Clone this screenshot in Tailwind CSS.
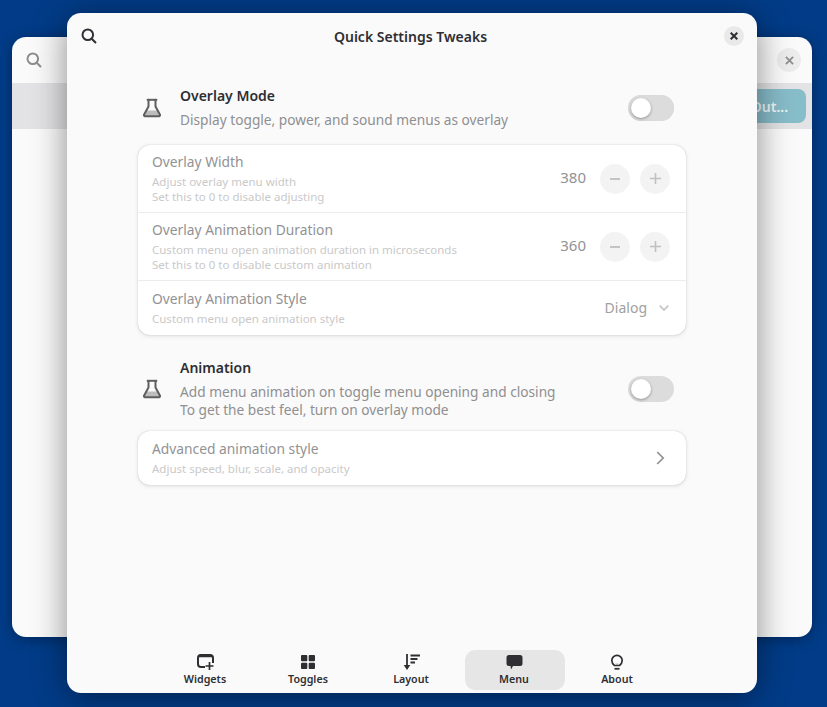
<!DOCTYPE html>
<html lang="en">
  <head>
    <meta charset="UTF-8" />
    <title>Quick Settings Tweaks</title>
    <script src="https://cdn.jsdelivr.net/npm/@tailwindcss/browser@4"></script>
  </head>
  <body class="relative w-[827px] h-[707px] overflow-hidden bg-[#023c88] font-['Noto_Sans',sans-serif]">
    <!-- window behind -->
    <div class="absolute left-[12px] top-[37px] w-[800px] h-[600px] rounded-[14px] bg-[#fafafb] shadow-[0_2px_14px_rgba(0,0,0,0.35)] overflow-hidden">
      <div class="h-[46px] flex items-center justify-between pl-[14px] pr-[11px]">
        <svg class="w-[16px] h-[16px] text-[#8e8e8e]" viewBox="0 0 16 16" fill="none" stroke="currentColor" stroke-width="2"><circle cx="6.8" cy="6.8" r="5.3" /><path d="M10.700 10.700 15 15" /></svg>
        <div class="w-[24px] h-[24px] rounded-full bg-[#ececec] flex items-center justify-center">
          <svg class="w-[9px] h-[9px] text-[#8e8e8e]" viewBox="0 0 10 10" stroke="currentColor" stroke-width="2"><path d="M1 1 9 9M9 1 1 9" /></svg>
        </div>
      </div>
      <div class="h-[46px] bg-[#e3e3e5] flex items-center justify-end pr-[6px]">
        <div class="w-[160px] h-[34px] rounded-[8px] bg-[#87bcc9] flex items-center justify-end pr-[18px] text-[14px] font-semibold text-[#eef6f8]">Out...</div>
      </div>
    </div>

    <!-- front window -->
    <div class="absolute left-[67px] top-[13px] w-[690px] h-[680px] rounded-[14px] bg-[#fafafa] shadow-[0_4px_34px_rgba(0,0,0,0.45)] flex flex-col text-[#2e2e33]">
      <header class="relative h-[46px] flex items-center justify-between pl-[14px] pr-[13px]">
        <svg class="w-[16px] h-[16px]" viewBox="0 0 16 16" fill="none" stroke="#2e2e33" stroke-width="2"><circle cx="6.800" cy="6.800" r="5.300" /><path d="M10.700 10.700 15 15" /></svg>
        <h1 class="text-[14px] font-semibold">Quick Settings Tweaks</h1>
        <div class="w-[20px] h-[20px] rounded-full bg-[#e9e9e9] flex items-center justify-center">
          <svg class="w-[8px] h-[8px]" viewBox="0 0 8 8" stroke="#2e2e33" stroke-width="2"><path d="M.7.7l6.6 6.600M7.300.7.7 7.300" /></svg>
        </div>
      </header>

      <main class="flex-1 px-[71px] pt-[19px]">
        <section class="flex items-center h-[60px] mb-[7px]">
          <div class="w-[42px] pl-[4px]">
            <svg class="w-[20px] h-[20px]" viewBox="0 0 20 20"><path d="M5 12.500h10l3 5.500H2z" fill="#bdbdbd" /><path d="M6.500 2v6.500L2 16.800a1 1 0 0 0 1 1.400h14a1 1 0 0 0 1-1.400L13.500 8.500V2" fill="none" stroke="#5e5e60" stroke-width="2" stroke-linejoin="round" /><path d="M4.800 1.800h10.400" stroke="#5e5e60" stroke-width="2" /></svg>
          </div>
          <div class="flex-1 pb-[2px]">
            <h2 class="text-[14px] font-semibold leading-[20px]">Overlay Mode</h2>
            <p class="text-[13.7px] leading-[19px] mt-[4px] text-[#8f8f91]">Display toggle, power, and sound menus as overlay</p>
          </div>
          <div class="w-[46px] h-[26px] rounded-full bg-[#dcdcdc] flex items-center pl-[3px] mr-[12px] shadow-[inset_0_0_1px_rgba(0,0,0,0.1)]">
            <div class="w-[20px] h-[20px] rounded-full bg-white shadow-[0_1px_3px_rgba(0,0,0,0.35)]"></div>
          </div>
        </section>

        <section class="w-[548px] rounded-[12px] bg-white shadow-[0_0_1px_rgba(0,0,0,0.25),0_1px_4px_rgba(0,0,0,0.12)] divide-y divide-[#ececec]">
          <div class="h-[68px] flex items-center justify-between pl-[14px] pr-[16px]">
            <div class="pb-[2px]">
              <div class="text-[13.8px] leading-[20px] text-[#929294]">Overlay Width</div>
              <div class="text-[11.5px] leading-[15px] mt-[2px] text-[#c9c9c9]">Adjust overlay menu width<br />Set this to 0 to disable adjusting</div>
            </div>
            <div class="flex items-center">
              <span class="text-[15px] text-[#929294] mr-[14px] pb-[2px]">380</span>
              <div class="w-[30px] h-[30px] rounded-full bg-[#f3f3f3] flex items-center justify-center mr-[10px]"><div class="w-[10px] h-[2px] bg-[#c4c4c4]"></div></div>
              <div class="w-[30px] h-[30px] rounded-full bg-[#f3f3f3] flex items-center justify-center"><svg class="w-[11px] h-[11px]" viewBox="0 0 11 11" stroke="#c0c0c0" stroke-width="1.600"><path d="M5.500 0v11M0 5.500h11" /></svg></div>
            </div>
          </div>
          <div class="h-[68px] flex items-center justify-between pl-[14px] pr-[16px]">
            <div class="pb-[2px]">
              <div class="text-[13.8px] leading-[20px] text-[#929294]">Overlay Animation Duration</div>
              <div class="text-[11.5px] leading-[15px] mt-[2px] text-[#c9c9c9]">Custom menu open animation duration in microseconds<br />Set this to 0 to disable custom animation</div>
            </div>
            <div class="flex items-center">
              <span class="text-[15px] text-[#929294] mr-[14px] pb-[2px]">360</span>
              <div class="w-[30px] h-[30px] rounded-full bg-[#f3f3f3] flex items-center justify-center mr-[10px]"><div class="w-[10px] h-[2px] bg-[#c4c4c4]"></div></div>
              <div class="w-[30px] h-[30px] rounded-full bg-[#f3f3f3] flex items-center justify-center"><svg class="w-[11px] h-[11px]" viewBox="0 0 11 11" stroke="#c0c0c0" stroke-width="1.600"><path d="M5.500 0v11M0 5.500h11" /></svg></div>
            </div>
          </div>
          <div class="h-[54px] flex items-center justify-between pl-[14px] pr-[16px]">
            <div class="pb-[2px]">
              <div class="text-[13.8px] leading-[20px] text-[#929294]">Overlay Animation Style</div>
              <div class="text-[11.5px] leading-[15px] mt-[2px] text-[#c9c9c9]">Custom menu open animation style</div>
            </div>
            <div class="flex items-center">
              <span class="text-[14px] text-[#a0a0a2] mr-[12px] pb-[2px]">Dialog</span>
              <svg class="w-[10px] h-[6px] mr-[1px]" viewBox="0 0 10 6" fill="none" stroke="#c4c4c4" stroke-width="1.700"><path d="m.7.7 4.300 4.300L9.300.7" /></svg>
            </div>
          </div>
        </section>

        <section class="flex items-center h-[60px] mt-[24px] mb-[12px]">
          <div class="w-[42px] pl-[4px]">
            <svg class="w-[20px] h-[20px]" viewBox="0 0 20 20"><path d="M5 12.500h10l3 5.500H2z" fill="#bdbdbd" /><path d="M6.500 2v6.500L2 16.800a1 1 0 0 0 1 1.400h14a1 1 0 0 0 1-1.400L13.500 8.500V2" fill="none" stroke="#5e5e60" stroke-width="2" stroke-linejoin="round" /><path d="M4.800 1.800h10.400" stroke="#5e5e60" stroke-width="2" /></svg>
          </div>
          <div class="flex-1 pb-[2px]">
            <h2 class="text-[14px] font-semibold leading-[20px]">Animation</h2>
            <p class="text-[13.7px] leading-[18px] mt-[5px] text-[#8f8f91]">Add menu animation on toggle menu opening and closing<br />To get the best feel, turn on overlay mode</p>
          </div>
          <div class="w-[46px] h-[26px] rounded-full bg-[#dcdcdc] flex items-center pl-[3px] mr-[12px]">
            <div class="w-[20px] h-[20px] rounded-full bg-white shadow-[0_1px_3px_rgba(0,0,0,0.35)]"></div>
          </div>
        </section>

        <section class="w-[548px] h-[54px] rounded-[12px] bg-white shadow-[0_0_1px_rgba(0,0,0,0.25),0_1px_4px_rgba(0,0,0,0.12)] flex items-center justify-between pl-[14px] pr-[21px]">
          <div class="pb-[2px]">
            <div class="text-[13.8px] leading-[20px] text-[#929294]">Advanced animation style</div>
            <div class="text-[11.5px] leading-[15px] mt-[2px] text-[#c9c9c9]">Adjust speed, blur, scale, and opacity</div>
          </div>
          <svg class="w-[9px] h-[14px]" viewBox="0 0 9 14" fill="none" stroke="#8f8f91" stroke-width="1.700"><path d="m1.200 1 6 6-6 6" /></svg>
        </section>
      </main>

      <nav class="h-[40px] mb-[3px] flex justify-center gap-[3px] text-[10.7px] font-semibold leading-[14px]">
        <div class="w-[100px] rounded-[10px] flex flex-col items-center pt-[4px] pr-[2px]">
          <svg class="w-[17px] h-[16px]" viewBox="0 0 17 16" fill="none" stroke="#2e2e33" stroke-width="2"><path d="M8 13H4a3 3 0 0 1-3-3V4a3 3 0 0 1 3-3h9a3 3 0 0 1 3 3v5" /><path d="M2 2h13" stroke-width="2.500" /><path d="M12.500 8v8M8.500 12h8" stroke-width="1.700" /></svg>
          <span class="mt-[2px]">Widgets</span>
        </div>
        <div class="w-[100px] rounded-[10px] flex flex-col items-center pt-[4px] pr-[2px]">
          <svg class="w-[16px] h-[16px]" viewBox="0 0 16 16" fill="#2e2e33"><rect x="1" y="1" width="6.300" height="6.300" rx="1" /><rect x="8.700" y="1" width="6.300" height="6.300" rx="1" /><rect x="1" y="8.700" width="6.300" height="6.300" rx="1" /><rect x="8.700" y="8.700" width="6.300" height="6.300" rx="1" /></svg>
          <span class="mt-[2px]">Toggles</span>
        </div>
        <div class="w-[100px] rounded-[10px] flex flex-col items-center pt-[4px] pr-[2px]">
          <svg class="w-[17px] h-[16px]" viewBox="0 0 17 16" fill="none" stroke="#2e2e33" stroke-width="1.800"><path d="M4 0v13" /><path d="M.7 11h6.600L4 16z" fill="#2e2e33" stroke="none" /><path d="M7.500 1.500H17M7.500 5h7M7.500 8.500H12" /></svg>
          <span class="mt-[2px]">Layout</span>
        </div>
        <div class="w-[100px] rounded-[10px] bg-[#e6e6e6] flex flex-col items-center pt-[4px] pr-[2px]">
          <svg class="w-[17px] h-[16px]" viewBox="0 0 17 16" fill="#2e2e33"><path d="M3 1h11a2.500 2.500 0 0 1 2.500 2.500v6A2.500 2.500 0 0 1 14 12H7l-2 3.500L4.500 12H3A2.500 2.500 0 0 1 .5 9.500v-6A2.500 2.500 0 0 1 3 1z" /></svg>
          <span class="mt-[2px]">Menu</span>
        </div>
        <div class="w-[100px] rounded-[10px] flex flex-col items-center pt-[4px] pr-[2px]">
          <svg class="w-[16px] h-[16px]" viewBox="0 0 16 16" fill="none" stroke="#2e2e33" stroke-width="1.700"><path d="M6 9.500h4l-2 1.500z" fill="#bdbdbd" stroke="none" /><path d="M5.500 11.500C4 10.300 2.800 8.800 2.800 6.500a5.200 5.200 0 0 1 10.400 0c0 2.300-1.200 3.800-2.700 5z" /><path d="M5.500 14.800h5" stroke-width="1.800" /></svg>
          <span class="mt-[2px]">About</span>
        </div>
      </nav>
    </div>
  </body>
</html>
